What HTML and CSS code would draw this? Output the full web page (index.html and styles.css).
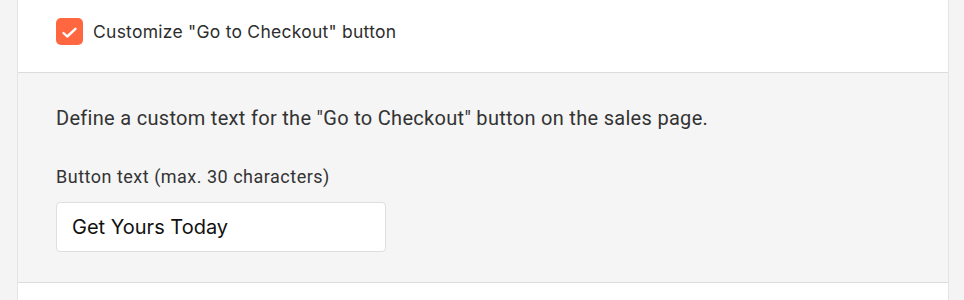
FILE: index.html
```html
<!DOCTYPE html>
<html lang="en">
<head>
<meta charset="utf-8">
<link rel="stylesheet" href="styles.css">
</head>
<body>
<div class="page">
  <div class="card">
    <div class="card-head">
      <label class="check">
        <span class="box">
          <svg width="27" height="27" viewBox="0 0 27 27"><path d="M7.5 15 L11.2 18.5 L19.5 10.8" fill="none" stroke="#fff" stroke-width="2.4" stroke-linecap="round" stroke-linejoin="round"/></svg>
        </span>
        <span class="check-label">Customize "Go to Checkout" button</span>
      </label>
    </div>
    <div class="card-body">
      <p class="desc">Define a custom text for the "Go to Checkout" button on the sales page.</p>
      <div class="field">
        <label class="field-label">Button text (max. 30 characters)</label>
        <div class="input">Get Yours Today</div>
      </div>
    </div>
    <div class="card-foot"></div>
  </div>
</div>
</body>
</html>
```
FILE: styles.css
```css
html, body {
  margin: 0;
  padding: 0;
  background: #f4f4f4;
  height: 300px;
  overflow: hidden;
}
.page {
  padding: 0 15px 0 17px;
}
.card {
  background: #fff;
  border-left: 1px solid #e4e4e4;
  border-right: 1px solid #e4e4e4;
  height: 300px;
  font-family: Inter, "Liberation Sans", sans-serif;
  color: #333;
}
.card-head {
  height: 73px;
  box-sizing: border-box;
  border-bottom: 1px solid #dcdcdc;
  display: flex;
  align-items: center;
  padding-left: 38px;
  padding-bottom: 9px;
}
.check {
  display: flex;
  align-items: center;
  gap: 10px;
}
.box {
  width: 27px;
  height: 27px;
  border-radius: 5px;
  background: #ff6740;
  display: flex;
}
.check-label {
  font-size: 17.5px;
  letter-spacing: 0.25px;
  color: #2e2e2e;
}
.card-body {
  background: #f5f5f5;
  border-bottom: 1px solid #dcdcdc;
  height: 210px;
  box-sizing: border-box;
  padding: 33px 38px 0;
}
.desc {
  margin: 0;
  font-family: Roboto, "Liberation Sans", sans-serif;
  font-size: 20px;
  letter-spacing: 0.3px;
  line-height: 24px;
  color: #333;
}
.field {
  margin-top: 37px;
}
.field-label {
  display: block;
  font-family: Roboto, "Liberation Sans", sans-serif;
  font-size: 18px;
  letter-spacing: 0.5px;
  line-height: 20px;
  color: #333;
}
.input {
  margin-top: 15px;
  width: 330px;
  height: 50px;
  box-sizing: border-box;
  background: #fff;
  border: 1px solid #dedede;
  border-radius: 4px;
  padding: 0 15px;
  display: flex;
  align-items: center;
  font-size: 20px;
  color: #111;
}
```
